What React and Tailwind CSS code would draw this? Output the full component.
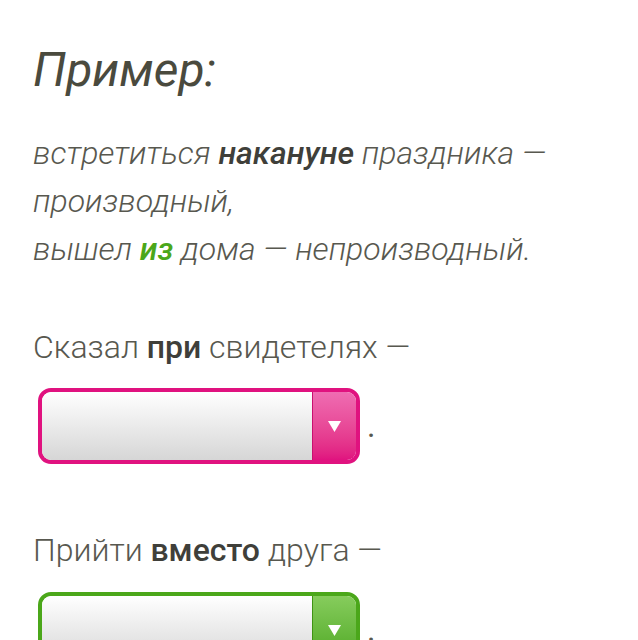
const PINK = {
  box: "border-[#e0127f]",
  btn: "bg-gradient-to-b from-[#ef6cb2] to-[#e0127f] border-l-[#c90f70]",
};
const GREEN = {
  box: "border-[#4ba71a]",
  btn: "bg-gradient-to-b from-[#86cc5c] to-[#4ba71a] border-l-[#3f9314]",
};

function FakeSelect({ tone }) {
  return (
    <div className="flex items-center gap-[7px] ml-[5px]">
      <div className={`flex w-[322px] h-[76px] rounded-[13px] border-[4px] overflow-hidden ${tone.box}`}>
        <div className="flex-1 bg-gradient-to-b from-white to-[#d6d6d6] rounded-l-[8px]" />
        <div className={`w-[44px] flex items-center justify-center border-l ${tone.btn}`}>
          <svg width="13" height="11" viewBox="0 0 13 11">
            <path d="M0 0 H13 L6.5 11 Z" fill="#fff" />
          </svg>
        </div>
      </div>
      <span className="text-[32px] leading-none">.</span>
    </div>
  );
}

export default function App() {
  return (
    <div
      className="bg-white min-h-[640px] pl-[33px] pr-[30px] pt-[38px] text-[#58584f]"
      style={{ fontFamily: "Roboto, 'Noto Sans', sans-serif" }}>
      <h2 className="italic text-[48px] leading-[64px] text-[#4a4a3e] font-normal mb-[27px]">Пример:</h2>

      <p className="italic font-light text-[32px] leading-[48px]">
        встретиться <b className="font-medium text-[#3f3f3a]">накануне</b> праздника — производный,
        <br />
        вышел <b className="font-medium text-[#4ba71a]">из</b> дома — непроизводный.
      </p>

      <div className="mt-[50px] font-light text-[32px] leading-[48px]">
        Сказал <b className="font-medium text-[#3f3f3a]">при</b> свидетелях —
      </div>
      <div className="mt-[17px]">
        <FakeSelect tone={PINK} />
      </div>

      <div className="mt-[62px] font-light text-[32px] leading-[48px]">
        Прийти <b className="font-medium text-[#3f3f3a]">вместо</b> друга —
      </div>
      <div className="mt-[18px]">
        <FakeSelect tone={GREEN} />
      </div>
    </div>
  );
}
